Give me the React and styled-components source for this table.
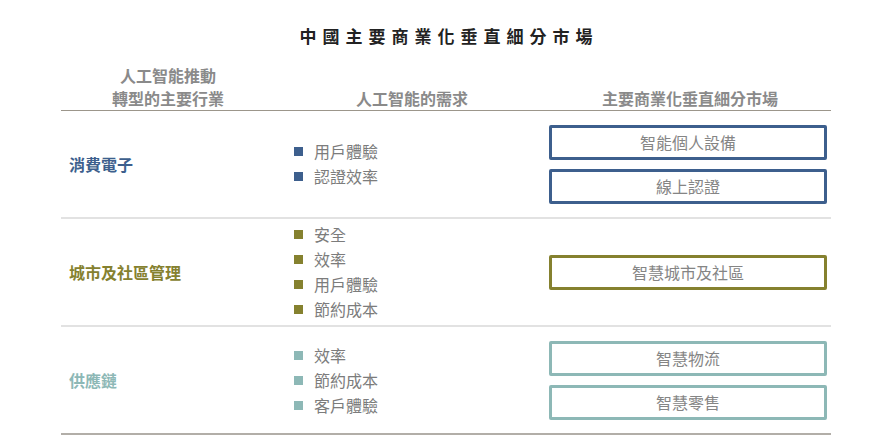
import styled, { createGlobalStyle } from "styled-components";

const GlobalStyle = createGlobalStyle`
  body {
    margin: 0;
    background: #ffffff;
    font-family: "Noto Sans CJK TC", "Noto Sans CJK SC", "Liberation Serif", serif;
  }
`;

const colors = {
  blue: "#3d5f8d",
  olive: "#85812f",
  teal: "#8db8b6",
};

const Page = styled.div`
  width: 770px;
  margin-left: 61px;
  padding-top: 22px;
`;

const Title = styled.h1`
  margin: 0;
  text-align: center;
  font-size: 17px;
  line-height: 28px;
  font-weight: 700;
  letter-spacing: 6px;
  padding-left: 6px;
  color: #222;
`;

const Table = styled.div`
  display: grid;
  grid-template-columns: 214px 274px 282px;
  margin-top: 14px;
`;

const HeadCell = styled.div`
  display: flex;
  flex-direction: column;
  justify-content: flex-end;
  align-items: center;
  font-size: 16px;
  line-height: 23px;
  font-weight: 700;
  color: #8a8a8a;
  border-bottom: 1.5px solid #9c968b;
`;

const Row = styled.div`
  display: contents;
`;

const Cell = styled.div`
  height: 106px;
  display: flex;
  flex-direction: column;
  justify-content: center;
  border-bottom: ${(p) => (p.$last ? "2px solid #b2aea8" : "2px solid #e2e2e2")};
`;

const Label = styled(Cell)`
  padding-left: 8px;
  font-size: 16px;
  font-weight: 700;
  color: ${(p) => p.$color};
`;

const Needs = styled(Cell)`
  padding-left: 19px;
`;

const Need = styled.div`
  display: flex;
  align-items: center;
  gap: 11px;
  font-size: 16px;
  line-height: 25px;
  color: #7c7c7c;
`;

const Square = styled.span`
  width: 9px;
  height: 9px;
  background: ${(p) => p.$color};
`;

const Markets = styled(Cell)`
  gap: 9px;
  padding-right: 4px;
`;

const Box = styled.div`
  height: 35px;
  box-sizing: border-box;
  border: 3px solid ${(p) => p.$color};
  border-radius: 2px;
  display: flex;
  align-items: center;
  justify-content: center;
  font-size: 16px;
  color: #858585;
`;

const rows = [
  {
    label: "消費電子",
    color: colors.blue,
    needs: ["用戶體驗", "認證效率"],
    markets: ["智能個人設備", "線上認證"],
  },
  {
    label: "城市及社區管理",
    color: colors.olive,
    needs: ["安全", "效率", "用戶體驗", "節約成本"],
    markets: ["智慧城市及社區"],
  },
  {
    label: "供應鏈",
    color: colors.teal,
    needs: ["效率", "節約成本", "客戶體驗"],
    markets: ["智慧物流", "智慧零售"],
  },
];

function App() {
  return (
    <>
      <GlobalStyle />
      <Page>
        <Title>中國主要商業化垂直細分市場</Title>
        <Table>
          <HeadCell>
            <span>人工智能推動</span>
            <span>轉型的主要行業</span>
          </HeadCell>
          <HeadCell>人工智能的需求</HeadCell>
          <HeadCell>主要商業化垂直細分市場</HeadCell>
          {rows.map((row, i) => {
            const last = i === rows.length - 1;
            return (
              <Row key={row.label}>
                <Label $color={row.color} $last={last}>
                  {row.label}
                </Label>
                <Needs $last={last}>
                  {row.needs.map((need) => (
                    <Need key={need}>
                      <Square $color={row.color} />
                      {need}
                    </Need>
                  ))}
                </Needs>
                <Markets $last={last}>
                  {row.markets.map((m) => (
                    <Box key={m} $color={row.color}>
                      {m}
                    </Box>
                  ))}
                </Markets>
              </Row>
            );
          })}
        </Table>
      </Page>
    </>
  );
}

export default App;
